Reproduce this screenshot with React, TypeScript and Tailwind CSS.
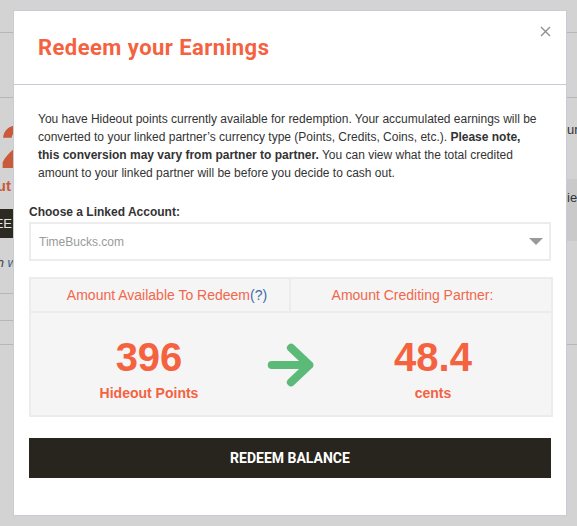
import React from 'react';

const Rule = ({ className = '' }: { className?: string }) => (
  <div className={`h-px bg-[#b7b7b7] ${className}`}></div>
);

const LeftPeek: React.FC = () => (
  <div className="w-[13px] overflow-hidden flex flex-col items-end">
    <div className="h-[32px] shrink-0"></div>
    <Rule className="w-[13px] shrink-0" />
    <div className="h-[64px] shrink-0"></div>
    <Rule className="w-[13px] shrink-0" />
    <div className="h-[24px] shrink-0"></div>
    <div className="text-[62px] leading-[50px] font-bold text-[#c95a3c] mr-[-22px] whitespace-nowrap">2</div>
    <div className="text-[15px] leading-[20px] font-bold text-[#c95a3c] mr-[2px] mt-[4px] whitespace-nowrap">out</div>
    <div className="h-[13px] shrink-0"></div>
    <div className="h-[29px] w-[60px] bg-[#2c2a22] text-[#e6e6e6] text-[13px] leading-[29px] text-right pr-[1px] whitespace-nowrap shrink-0">
      REDEE
    </div>
    <div className="h-[17px] shrink-0"></div>
    <div className="text-[13px] leading-[16px] italic text-[#444] whitespace-nowrap mr-[-4px]">
      with <span className="text-[#3b5f8f]">w</span>
    </div>
    <div className="h-[22px] shrink-0"></div>
    <Rule className="w-[13px] shrink-0" />
    <div className="h-[26px] shrink-0"></div>
    <Rule className="w-[13px] shrink-0" />
    <div className="h-[23px] shrink-0"></div>
    <Rule className="w-[13px] shrink-0" />
  </div>
);

const RightPeek: React.FC = () => (
  <div className="w-[10px] overflow-hidden flex flex-col">
    <div className="h-[32px] shrink-0"></div>
    <Rule className="w-[10px] shrink-0" />
    <div className="h-[64px] shrink-0"></div>
    <Rule className="w-[10px] shrink-0" />
    <div className="h-[24px] shrink-0"></div>
    <div className="text-[13px] leading-[16px] text-[#333] whitespace-nowrap">ur</div>
    <div className="h-[41px] shrink-0"></div>
    <div className="h-[62px] bg-[#c9c9c9] pt-[11px] text-[13px] leading-[16px] text-[#333] whitespace-nowrap shrink-0">
      ie
    </div>
    <div className="h-[103px] shrink-0"></div>
    <Rule className="w-[10px] shrink-0" />
  </div>
);

const GreenArrow: React.FC = () => (
  <svg width="50" height="46" viewBox="0 0 50 46" fill="none">
    <path
      d="M5 23 H44 M25 5 L44 23 L25 41"
      stroke="#5cba78"
      strokeWidth="8.5"
      strokeLinecap="round"
      strokeLinejoin="round"
    />
  </svg>
);

const App: React.FC = () => {
  return (
    <div className="relative w-[577px] h-[526px] bg-[#d3d3d3] overflow-hidden font-['Liberation_Sans',Arial,sans-serif]">
      <div className="flex h-full justify-between">
        <LeftPeek />
        <RightPeek />
      </div>

      <div className="absolute left-[13px] top-[10px] w-[554px] h-[506px] bg-white border border-[#c7ccd5] flex flex-col">
        <div className="relative h-[74px] shrink-0 border-b border-[#c7ccd5] flex items-center px-[24px]">
          <h2 className="font-['Roboto',sans-serif] font-bold text-[22px] text-[#f4623f] tracking-[0.45px]">
            Redeem your Earnings
          </h2>
          <button className="absolute right-[15px] top-[14px] w-[12px] h-[12px] flex items-center justify-center">
            <svg width="11" height="11" viewBox="0 0 11 11">
              <path d="M1 1 L10 10 M10 1 L1 10" stroke="#8a8f96" strokeWidth="1.4" />
            </svg>
          </button>
        </div>

        <div className="px-[15px] pt-[25px] flex flex-col">
          <p className="px-[9px] text-[12px] leading-[18px] text-[#333]">
            You have Hideout points currently available for redemption. Your accumulated earnings will be
            converted to your linked partner’s currency type (Points, Credits, Coins, etc.).{' '}
            <strong>Please note, this conversion may vary from partner to partner.</strong> You can view what
            the total credited amount to your linked partner will be before you decide to cash out.
          </p>

          <label className="mt-[21px] text-[12px] leading-[18px] font-bold text-[#333]">
            Choose a Linked Account:
          </label>
          <div className="mt-[1px] h-[39px] border-2 border-[#ececec] flex items-center justify-between pl-[8px] pr-[6px]">
            <span className="text-[12px] text-[#9a9a9a]">TimeBucks.com</span>
            <svg width="14" height="8" viewBox="0 0 14 8">
              <path d="M0 0 H14 L7 7 Z" fill="#9a9a9a" />
            </svg>
          </div>

          <div className="mt-[16px] mr-[-2px] border-2 border-[#ececec] bg-[#f5f5f5]">
            <div className="grid grid-cols-2 h-[34px] border-b-2 border-[#ececec]">
              <div className="flex items-center justify-center pl-[14px] border-r-2 border-[#ececec] text-[14px] text-[#f2674b]">
                Amount Available To Redeem<span className="text-[#3c6da8]">(?)</span>
              </div>
              <div className="flex items-center justify-center pr-[17px] text-[14px] text-[#f2674b]">
                Amount Crediting Partner:
              </div>
            </div>
            <div className="grid grid-cols-[1fr_48px_1fr] h-[102px] items-center">
              <div className="flex flex-col items-center pt-[10px]">
                <div className="text-[40px] leading-[42px] font-bold text-[#f4623f]">396</div>
                <div className="mt-[6px] text-[14px] leading-[18px] font-bold text-[#f4623f]">Hideout Points</div>
              </div>
              <div className="flex items-center justify-center mt-[2px]">
                <GreenArrow />
              </div>
              <div className="flex flex-col items-center pt-[10px]">
                <div className="text-[40px] leading-[42px] font-bold text-[#f4623f]">48.4</div>
                <div className="mt-[6px] text-[14px] leading-[18px] font-bold text-[#f4623f]">cents</div>
              </div>
            </div>
          </div>

          <button className="mt-[21px] h-[40px] w-full bg-[#27251d] text-white font-['Roboto',sans-serif] font-bold text-[14px]">
            REDEEM BALANCE
          </button>
        </div>
      </div>
    </div>
  );
};

export default App;
